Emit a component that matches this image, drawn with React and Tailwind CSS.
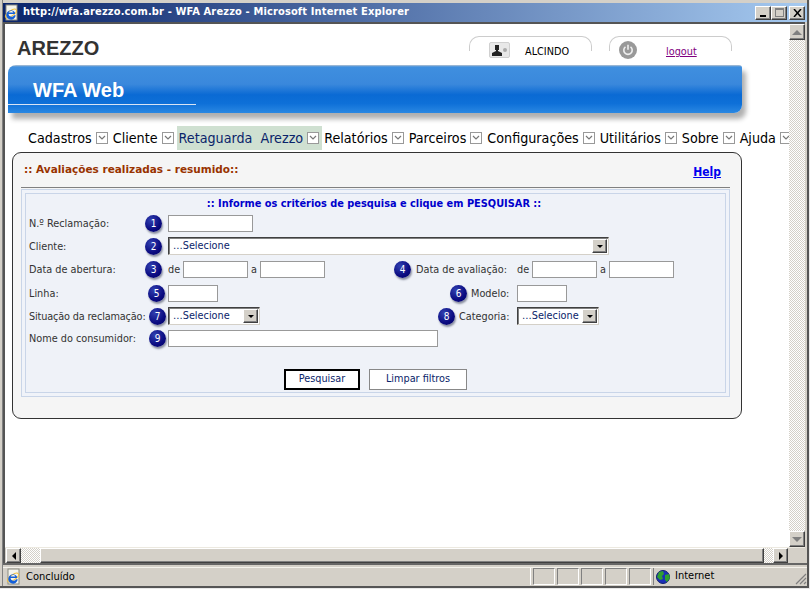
import React from 'react';

const raised = "border border-t-white border-l-white border-r-[#404040] border-b-[#404040] bg-[#d4d0c8] shadow-[inset_-1px_-1px_0_#808080]";
const dither = "bg-[repeating-conic-gradient(#d4d0c8_0_25%,#ffffff_0_50%)] bg-[length:2px_2px]";
const menus = [
  ["Cadastros", false], ["Cliente", false], ["Retaguarda Arezzo", true], ["Relatórios", false],
  ["Parceiros", false], ["Configurações", false], ["Utilitários", false], ["Sobre", false], ["Ajuda", false],
];

function IeIcon() {
  return (
    <svg width="17" height="17" viewBox="0 0 17 17" className="shrink-0">
      <rect x="3" y="1" width="11" height="15" fill="#f4f4ec" stroke="#8a8a80" />
      <ellipse cx="8" cy="9.5" rx="6.5" ry="2.6" fill="none" stroke="#f0c040" transform="rotate(-35 8 9.5)" />
      <path d="M12 10H5.5a3 3 0 0 0 5.6 1.2h1.6A4.7 4.7 0 1 1 12 8.5zM5.6 8.6h4.7a2.4 2.4 0 0 0-4.7 0z" fill="#1560d8" />
    </svg>
  );
}

function Globe() {
  return (
    <svg width="16" height="16" viewBox="0 0 16 16" className="shrink-0">
      <circle cx="8" cy="8" r="6.5" fill="#1a2fb8" stroke="#10206e" />
      <path d="M4 3l4-1 1 3-2 2 1 3-3 1-3-3zM10 6l4-1 1 4-3 4-2-2z" fill="#30a030" />
    </svg>
  );
}

function Arrow({ dir }) {
  if (dir === "up") return <span className="w-0 h-0 border-x-[5px] border-x-transparent border-b-[5px] border-b-[#808080]"></span>;
  if (dir === "down") return <span className="w-0 h-0 border-x-[5px] border-x-transparent border-t-[5px] border-t-[#808080]"></span>;
  if (dir === "left") return <span className="w-0 h-0 border-y-[4px] border-y-transparent border-r-[4px] border-r-black"></span>;
  return <span className="w-0 h-0 border-y-[4px] border-y-transparent border-l-[4px] border-l-black"></span>;
}

function MenuItem({ label, active }) {
  return (
    <div className={`flex items-center shrink-0 h-[24px] pl-[2px] pr-[3px] ${active ? "bg-[#cfe0d1] text-[#0a246a]" : "text-black"}`}>
      <span className="whitespace-nowrap pt-[2px]">{label}</span>
      <span className="ml-[4px] w-[12px] h-[12px] border border-[#999999] bg-white flex items-center justify-center">
        <svg width="8" height="6" viewBox="0 0 8 6"><path d="M1 1l3 3 3-3" fill="none" stroke="#777777" strokeWidth="1.2" /></svg>
      </span>
    </div>
  );
}

function Badge({ n, className = "" }) {
  return (
    <span className={`w-[17px] h-[17px] shrink-0 rounded-full bg-[radial-gradient(circle_at_35%_30%,#3040b0,#0a0a80_60%,#000060)] shadow-[1px_2px_2px_#8a8fa0] text-white text-[10px] leading-[17px] text-center font-['DejaVu_Sans_Condensed',sans-serif] ${className}`}>
      {n}
    </span>
  );
}

function Field({ className = "" }) {
  return <input type="text" className={`h-[17px] bg-white border border-[#999999] shrink-0 outline-none ${className}`} />;
}

function Select({ className = "" }) {
  return (
    <div className={`h-[18px] flex shrink-0 bg-white border border-t-[#404040] border-l-[#404040] border-r-[#d4d0c8] border-b-[#d4d0c8] shadow-[inset_1px_1px_0_#808080] pl-[4px] pr-[1px] py-[1px] items-center text-[#0a246a] ${className}`}>
      <span className="flex-1 leading-[14px] whitespace-nowrap">…Selecione</span>
      <span className={`w-[15px] h-[14px] flex items-center justify-center ${raised}`}>
        <span className="w-0 h-0 border-x-[3px] border-x-transparent border-t-[3px] border-t-black"></span>
      </span>
    </div>
  );
}

function Label({ children, className = "" }) {
  return <span className={`shrink-0 mt-[2px] text-[#333333] whitespace-nowrap ${className}`}>{children}</span>;
}

function SearchForm() {
  return (
    <div className="ml-[8px] mr-[11px] mt-[1px] border border-[#c9d5e8] p-[3px] bg-[#f0f3f9]">
      <div className="border border-[#c9d5e8] bg-[#eff2f8] h-[200px] pl-[3px]">
        <p className="text-center font-['DejaVu_Sans',sans-serif] font-bold text-[9.8px] leading-[13px] pt-[3px] pr-[6px] text-[#0000cc]">
          :: Informe os critérios de pesquisa e clique em PESQUISAR ::
        </p>
        <div className="flex items-center mt-[5px] h-[17px]">
          <Label className="w-[116px]">N.º Reclamação:</Label>
          <Badge n="1" />
          <Field className="w-[85px] ml-[6px]" />
        </div>
        <div className="flex items-center mt-[5px] h-[18px]">
          <Label className="w-[116px]">Cliente:</Label>
          <Badge n="2" />
          <Select className="w-[441px] ml-[6px]" />
        </div>
        <div className="flex items-center mt-[6px] h-[17px]">
          <Label className="w-[116px]">Data de abertura:</Label>
          <Badge n="3" />
          <Label className="w-[15px] ml-[6px]">de</Label>
          <Field className="w-[65px]" />
          <Label className="w-[9px] ml-[3px]">a</Label>
          <Field className="w-[65px]" />
          <Badge n="4" className="ml-[69px]" />
          <Label className="w-[101px] ml-[5px]">Data de avaliação:</Label>
          <Label className="w-[15px]">de</Label>
          <Field className="w-[65px]" />
          <Label className="w-[9px] ml-[3px]">a</Label>
          <Field className="w-[65px]" />
        </div>
        <div className="flex items-center mt-[7px] h-[17px]">
          <Label className="w-[119px]">Linha:</Label>
          <Badge n="5" />
          <Field className="w-[50px] ml-[3px]" />
          <Badge n="6" className="ml-[232px]" />
          <Label className="w-[46px] ml-[4px]">Modelo:</Label>
          <Field className="w-[50px]" />
        </div>
        <div className="flex items-center mt-[5px] h-[18px]">
          <Label className="w-[120px] tracking-[-0.15px]">Situação da reclamação:</Label>
          <Badge n="7" />
          <Select className="w-[92px] ml-[2px]" />
          <Badge n="8" className="ml-[178px]" />
          <Label className="w-[58px] ml-[4px]">Categoria:</Label>
          <Select className="w-[82px]" />
        </div>
        <div className="flex items-center mt-[5px] h-[17px]">
          <Label className="w-[120px]">Nome do consumidor:</Label>
          <Badge n="9" />
          <Field className="w-[270px] ml-[2px]" />
        </div>
        <div className="flex justify-center gap-[9px] mt-[22px] ml-[-3px]">
          <button className="w-[76px] h-[21px] bg-white border-2 border-black text-[#0a246a]">Pesquisar</button>
          <button className="w-[98px] h-[21px] bg-white border border-[#888888] text-[#0a246a]">Limpar filtros</button>
        </div>
      </div>
    </div>
  );
}

function Page() {
  return (
    <div className="h-full overflow-hidden bg-white text-[10.8px] font-['DejaVu_Sans_Condensed',sans-serif]">
      <div className="flex h-[41px] pl-[12px] pt-[12px]">
        <h1 className="font-['Liberation_Sans',sans-serif] font-bold text-[20px] leading-[24px] text-[#333333] w-[452px]">AREZZO</h1>
        <div className="w-[123px] h-[15px] border border-b-0 border-[#cccccc] rounded-t-[10px] flex items-start pl-[19px] text-black">
          <span className="w-[21px] h-[16px] mt-[5px] bg-[#e8e8e8] border border-[#d0d0d0] rounded-[2px] flex items-center justify-between px-[2px] shrink-0">
            <svg width="10" height="11" viewBox="0 0 10 11"><path d="M3 0h4v5H6v1l4 2v3H0V8l4-2V5H3z" fill="#222222" /></svg>
            <span className="w-[4px] h-[4px] rounded-full bg-[#aaaaaa]"></span>
          </span>
          <span className="ml-[15px] mt-[8px] leading-[14px] whitespace-nowrap">ALCINDO</span>
        </div>
        <div className="w-[123px] h-[15px] ml-[17px] border border-b-0 border-[#cccccc] rounded-t-[10px] flex items-start pl-[9px]">
          <span className="w-[18px] h-[18px] mt-[4px] rounded-full bg-[#999999] flex items-center justify-center shrink-0">
            <svg width="12" height="12" viewBox="0 0 12 12"><path d="M3.5 2.8a4.2 4.2 0 1 0 5 0M6 .8v5" fill="none" stroke="#eeeeee" strokeWidth="1.6" /></svg>
          </span>
          <a href="#" className="ml-[29px] mt-[8px] leading-[14px] text-[#800080] underline">logout</a>
        </div>
      </div>
      <div className="relative w-[734px] h-[48px] ml-[3px] rounded-tl-[8px] rounded-br-[8px] rounded-tr-[3px] bg-[linear-gradient(180deg,#b8c4d0_0,#3f8fdf_4%,#3a88dc_40%,#0a6ad4_62%,#0e70d8_80%,#2a88e2_100%)] shadow-[4px_6px_5px_#b0b0b0] pl-[25px] pt-[13px]">
        <h2 className="font-['Liberation_Sans',sans-serif] font-bold text-[20px] leading-[24px] text-white">WFA Web</h2>
        <div className="absolute left-0 bottom-[8px] w-[188px] h-px bg-[#d8e4f4]"></div>
      </div>
      <nav className="flex items-center h-[24px] mt-[13px] pl-[21px] text-[14.2px] [word-spacing:4px] w-[810px]">
        {menus.map(([label, active]) => <MenuItem key={label} label={label} active={active} />)}
      </nav>
      <section className="w-[730px] h-[267px] ml-[7px] mt-[2px] bg-[#f5f5f5] border border-[#333333] rounded-[9px]">
        <div className="flex items-center justify-between h-[34px] pl-[11px] pr-[20px]">
          <h3 className="font-['DejaVu_Sans',sans-serif] font-bold text-[10.5px] text-[#993300]">:: Avaliações realizadas - resumido::</h3>
          <a href="#" className="mt-[3px] font-bold text-[12px] text-[#0000ee] underline">Help</a>
        </div>
        <div className="ml-[8px] mr-[11px] h-px bg-[#808080]"></div>
        <SearchForm />
      </section>
    </div>
  );
}

export default function App() {
  return (
    <div className="w-[810px] h-[589px] overflow-hidden flex flex-col bg-[#d4d0c8] shadow-[inset_-1px_-1px_0_#e8e8e8,inset_-3px_-3px_0_#555555,inset_2px_0_0_#d4d0c8,inset_3px_0_0_#808080] pt-[3px] pl-[3px] pr-[3px] pb-[4px] font-['DejaVu_Sans_Condensed',sans-serif] text-[11px]">
      <header className="h-[19px] shrink-0 flex items-center bg-[linear-gradient(90deg,#0a246a,#a6caf0)] pr-[2px]">
        <IeIcon />
        <span className="ml-[3px] font-bold text-[11px] tracking-[0.14px] text-white whitespace-nowrap">http://wfa.arezzo.com.br - WFA Arezzo - Microsoft Internet Explorer</span>
        <div className="ml-auto flex">
          <button className={`w-[16px] h-[14px] flex items-end justify-center pb-[2px] ${raised}`}><span className="w-[6px] h-[2px] bg-black"></span></button>
          <button className={`w-[16px] h-[14px] flex items-center justify-center ${raised}`}><span className="w-[9px] h-[9px] border border-[#808080] border-t-2"></span></button>
          <button className={`w-[16px] h-[14px] ml-[2px] flex items-center justify-center ${raised}`}>
            <svg width="9" height="8" viewBox="0 0 9 8"><path d="M1 0l7 8M8 0L1 8" stroke="black" strokeWidth="1.5" fill="none" /></svg>
          </button>
        </div>
      </header>
      <div className="flex-1 min-h-0 flex flex-col mr-[2px] border-l-2 border-t-2 border-[#555555]">
        <div className="flex-1 min-h-0 flex">
          <main className="flex-1 min-w-0"><Page /></main>
          <aside className={`w-[16px] shrink-0 flex flex-col justify-between ${dither}`}>
            <div className={`h-[16px] flex items-center justify-center ${raised}`}><Arrow dir="up" /></div>
            <div className={`h-[16px] flex items-center justify-center ${raised}`}><Arrow dir="down" /></div>
          </aside>
        </div>
        <div className="h-[15px] shrink-0 flex pl-[1px] border-t border-[#ece9e0] box-content bg-[#d4d0c8]">
          <div className={`w-[15px] flex items-center justify-center ${raised}`}><Arrow dir="left" /></div>
          <div className={`w-[19px] ${dither}`}></div>
          <div className={`flex-1 ${raised}`}></div>
          <div className={`w-[9px] ${dither}`}></div>
          <div className={`w-[15px] flex items-center justify-center ${raised}`}><Arrow dir="right" /></div>
          <div className="w-[17px]"></div>
        </div>
      </div>
      <div className="h-[2px] bg-[#666666] shrink-0"></div>
      <footer className="h-[18px] shrink-0 mt-[2px] flex items-center border-t border-[#f4f2ec] text-black">
        <div className="ml-[2px]"><IeIcon /></div>
        <span className="ml-[4px] flex-1 h-[17px] leading-[17px] mr-[2px] border-r border-white">Concluído</span>
        {[0, 1, 2, 3, 4].map(i => (
          <span key={i} className="w-[22px] h-[17px] mr-[2px] border border-t-[#808080] border-l-[#808080] border-r-white border-b-white"></span>
        ))}
        <div className="relative w-[154px] h-[17px] flex items-center pl-[1px] border-l border-[#808080]">
          <Globe />
          <span className="ml-[4px]">Internet</span>
          <svg width="12" height="12" viewBox="0 0 12 12" className="absolute right-0 bottom-0">
            <path d="M11 1L1 11M11 5L5 11M11 9L9 11" stroke="#808080" strokeWidth="1.2" />
          </svg>
        </div>
      </footer>
    </div>
  );
}
